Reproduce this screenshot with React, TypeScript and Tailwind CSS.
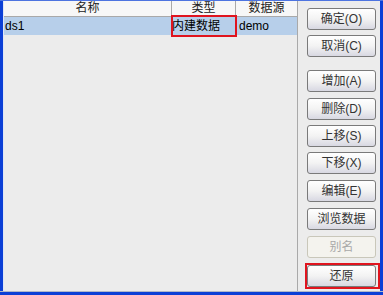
import React from 'react'

const font = { fontFamily: '"Liberation Sans", "Noto Sans CJK SC", sans-serif' }

type Btn = { label: string; top: string; disabled?: boolean; marked?: boolean }

const buttons: Btn[] = [
  { label: '确定(O)', top: 'mt-[7px]' },
  { label: '取消(C)', top: 'mt-[5px]' },
  { label: '增加(A)', top: 'mt-[13px]' },
  { label: '删除(D)', top: 'mt-[6px]' },
  { label: '上移(S)', top: 'mt-[5px]' },
  { label: '下移(X)', top: 'mt-[5px]' },
  { label: '编辑(E)', top: 'mt-[6px]' },
  { label: '浏览数据', top: 'mt-[6px]' },
  { label: '别名', top: 'mt-[6px]', disabled: true },
  { label: '还原', top: 'mt-[5px]', marked: true },
]

function XpButton({ b }: { b: Btn }) {
  const inner = (
    <div
      className={
        'flex h-[22px] w-[69px] items-center justify-center rounded-[3px] border text-[12px] leading-none ' +
        (b.disabled
          ? 'border-[#c9c7ba] bg-[#f4f3ee] text-[#a8a8a8]'
          : 'border-[#7a7a7a] bg-gradient-to-b from-white via-[#f3f3f3] to-[#d8d8e2] text-[#333]')
      }
    >
      {b.label}
    </div>
  )
  if (b.marked) {
    return (
      <div className={'ml-[-2px] border-2 border-[#e0141e] ' + b.top}>
        {inner}
      </div>
    )
  }
  return <div className={b.top}>{inner}</div>
}

export default function App() {
  return (
    <div className="flex h-[295px] w-[383px] flex-col bg-[#0b3fd6]" style={font}>
      <div className="flex flex-1 border-t border-[#4d74e0]">
        <div className="w-[3px] bg-[#0b3fd6]" />
        <div className="flex flex-1 border-l border-[#dfe6f5] bg-[#ececec]">
          {/* table */}
          <div className="flex w-[294px] flex-col border-r border-[#a9a9a9] bg-[#ececec]">
            <div className="flex h-[16px] border-b border-[#a9a9a9] bg-[#f7f7f7] text-[12px] leading-[15px] text-[#222]">
              <div className="w-[168px] border-r border-[#a9a9a9] text-center">名称</div>
              <div className="w-[64px] border-r border-[#a9a9a9] text-center">类型</div>
              <div className="flex-1 text-center">数据源</div>
            </div>
            <div className="flex h-[18px] bg-[#b7cfea] text-[12px] leading-[18px] text-black">
              <div className="w-[168px] pl-[1px]">ds1</div>
              <div className="relative w-[65px]">
                内建数据
                <div className="absolute -bottom-[2px] -left-[1px] -top-[2px] right-0 border-2 border-[#e0141e]" />
              </div>
              <div className="flex-1 pl-[2px]">demo</div>
            </div>
            <div className="flex-1" />
          </div>
          {/* buttons */}
          <div className="flex w-[82px] flex-col pl-[9px]">
            {buttons.map((b) => (
              <XpButton key={b.label} b={b} />
            ))}
          </div>
        </div>
        <div className="w-[3px] bg-[#0b3fd6]" />
      </div>
      <div className="h-[4px] border-t border-[#b0b8c8] bg-[#0b3fd6]" />
    </div>
  )
}
